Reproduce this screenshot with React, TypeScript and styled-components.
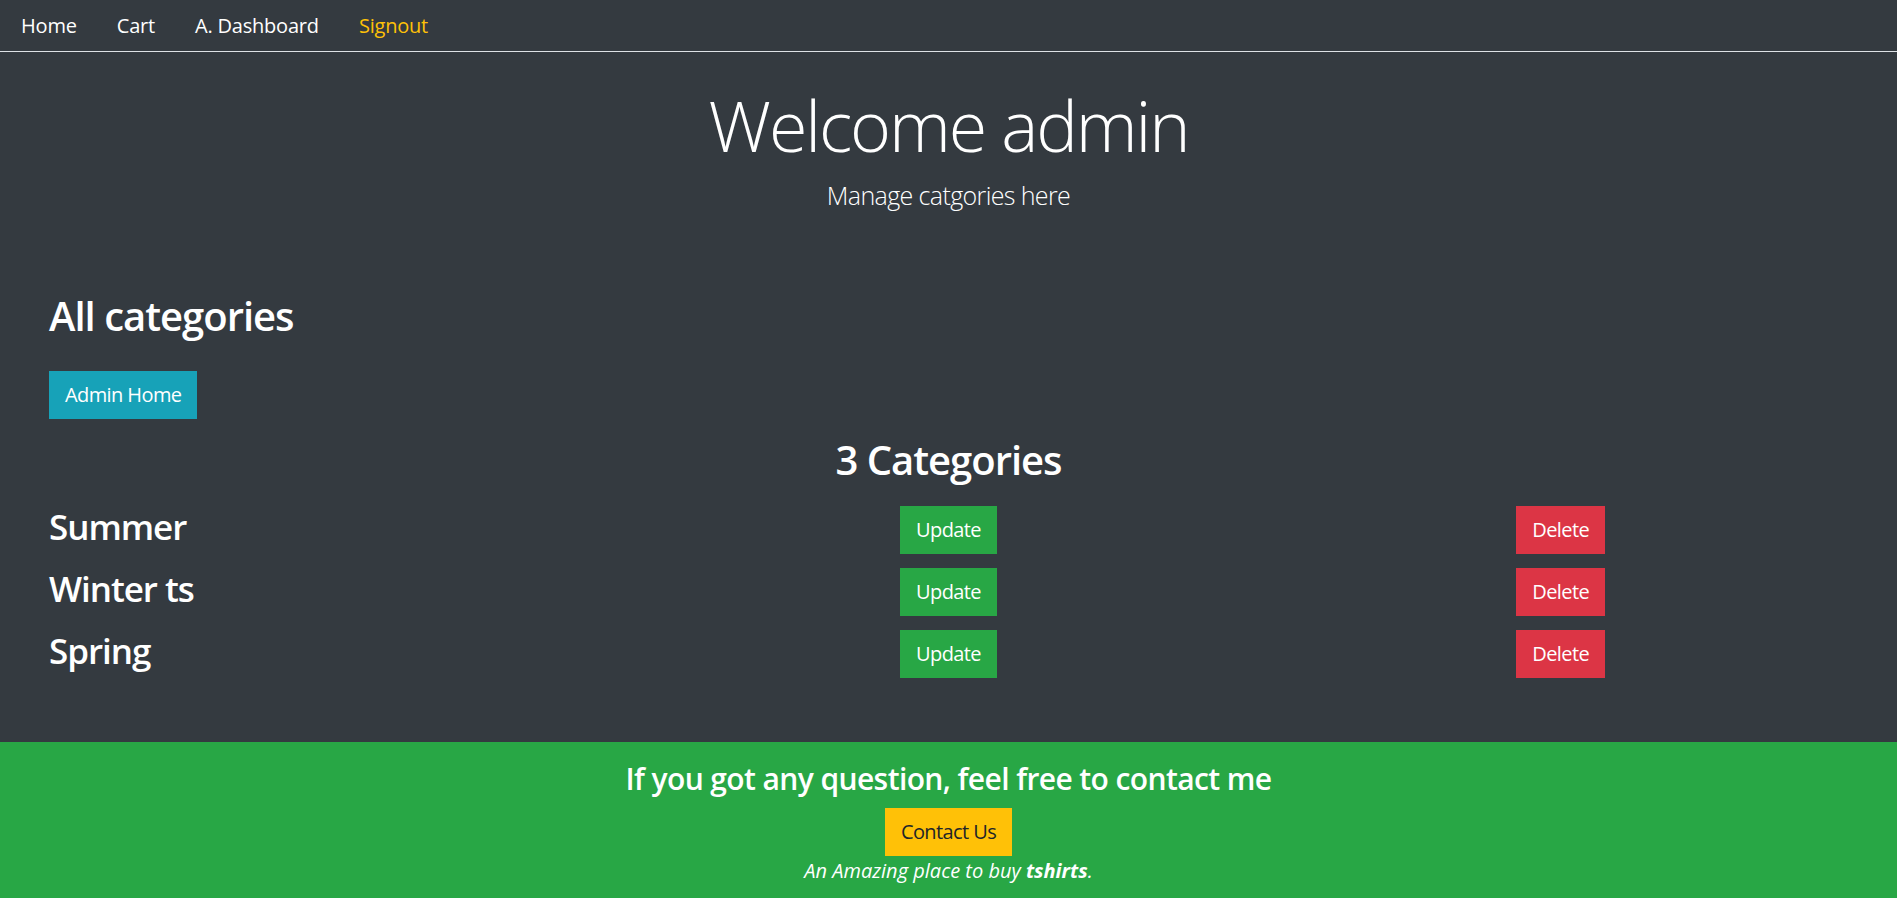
import React from "react";
import styled, { createGlobalStyle } from "styled-components";

const GlobalStyle = createGlobalStyle`
  * { box-sizing: border-box; }
  html, body { margin: 0; padding: 0; }
  body {
    background: #343a40;
    color: #ffffff;
    font-family: "Open Sans", "Noto Sans", Arial, sans-serif;
    font-size: 20px;
    line-height: 1.5;
  }
`;

const Page = styled.div`
  display: flex;
  flex-direction: column;
  min-height: 100vh;
  background: #343a40;
`;

const NavBar = styled.ul`
  display: flex;
  list-style: none;
  margin: 0;
  padding: 0 0 0 1px;
  border-bottom: 1px solid #dee2e6;
`;

const NavLink = styled.a<{ $warning?: boolean }>`
  display: block;
  padding: 11px 20px 10px;
  line-height: 30px;
  font-size: 20px;
  color: ${(p) => (p.$warning ? "#ffc107" : "#ffffff")};
  text-decoration: none;
  letter-spacing: -0.01em;
  cursor: pointer;
`;

const Hero = styled.header`
  text-align: center;
  padding-top: 31px;
`;

const Title = styled.h1`
  margin: 0 0 10px;
  font-size: 70px;
  line-height: 84px;
  font-weight: 300;
  letter-spacing: -0.03em;
`;

const Lead = styled.p`
  margin: 0;
  font-size: 25px;
  line-height: 37.5px;
  font-weight: 300;
  letter-spacing: -0.025em;
`;

const Main = styled.main`
  padding: 77px 49px 64px;
`;

const SectionTitle = styled.h2<{ $center?: boolean }>`
  margin: 0;
  font-size: 40px;
  line-height: 48px;
  font-weight: 600;
  letter-spacing: -0.025em;
  text-align: ${(p) => (p.$center ? "center" : "left")};
`;

const Button = styled.button<{ $variant: "info" | "success" | "danger" | "warning" }>`
  display: inline-block;
  font-family: inherit;
  font-size: 20px;
  line-height: 30px;
  padding: 8px 15px;
  border: 1px solid transparent;
  border-radius: 0;
  letter-spacing: -0.03em;
  cursor: pointer;
  color: ${(p) => (p.$variant === "warning" ? "#212529" : "#ffffff")};
  background: ${(p) =>
    ({ info: "#17a2b8", success: "#28a745", danger: "#dc3545", warning: "#ffc107" }[p.$variant])};
`;

const AdminRow = styled.div`
  margin-top: 31px;
  margin-bottom: 17px;
`;

const CategoryList = styled.div`
  display: flex;
  flex-direction: column;
  gap: 14px;
  margin-top: 22px;
`;

const CategoryRow = styled.div`
  display: grid;
  grid-template-columns: repeat(3, 1fr);
  column-gap: 37.5px;
  align-items: start;
`;

const CategoryName = styled.h3`
  margin: 0;
  font-size: 35px;
  line-height: 42px;
  font-weight: 600;
  letter-spacing: -0.03em;
`;

const Cell = styled.div`
  display: flex;
  justify-content: center;
`;

const Footer = styled.footer`
  margin-top: auto;
  background: #28a745;
  text-align: center;
  padding: 19px 0 20px;
`;

const FooterTitle = styled.h4`
  margin: 0 0 11px;
  font-size: 30px;
  line-height: 36px;
  font-weight: 600;
  letter-spacing: -0.02em;
`;

const Tagline = styled.span`
  display: block;
  font-style: italic;
  font-size: 20px;
  line-height: 30px;
  letter-spacing: 0;
`;

const categories = ["Summer", "Winter ts", "Spring"];

export default function App() {
  return (
    <>
      <GlobalStyle />
      <Page>
        <NavBar>
          <li><NavLink>Home</NavLink></li>
          <li><NavLink>Cart</NavLink></li>
          <li><NavLink>A. Dashboard</NavLink></li>
          <li><NavLink $warning>Signout</NavLink></li>
        </NavBar>
        <Hero>
          <Title>Welcome admin</Title>
          <Lead>Manage catgories here</Lead>
        </Hero>
        <Main>
          <SectionTitle>All categories</SectionTitle>
          <AdminRow>
            <Button $variant="info">Admin Home</Button>
          </AdminRow>
          <SectionTitle $center>3 Categories</SectionTitle>
          <CategoryList>
            {categories.map((c) => (
              <CategoryRow key={c}>
                <CategoryName>{c}</CategoryName>
                <Cell>
                  <Button $variant="success">Update</Button>
                </Cell>
                <Cell>
                  <Button $variant="danger">Delete</Button>
                </Cell>
              </CategoryRow>
            ))}
          </CategoryList>
        </Main>
        <Footer>
          <FooterTitle>If you got any question, feel free to contact me</FooterTitle>
          <Button $variant="warning">Contact Us</Button>
          <Tagline>
            An Amazing place to buy <b>tshirts</b>.
          </Tagline>
        </Footer>
      </Page>
    </>
  );
}
